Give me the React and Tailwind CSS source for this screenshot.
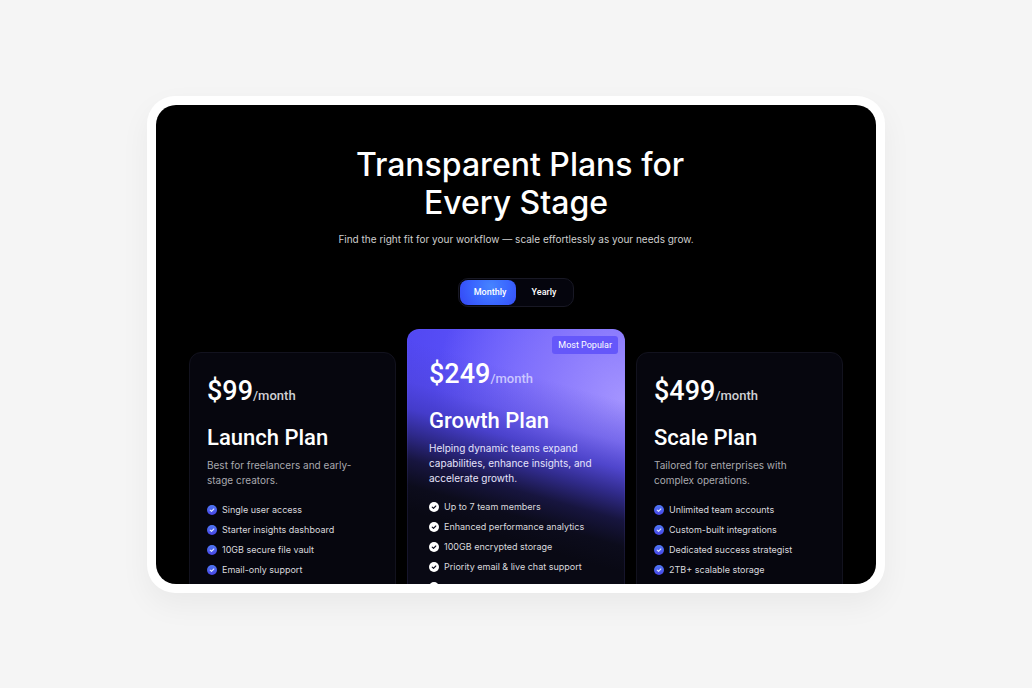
import React, { useState } from 'react'
import clsx from 'clsx'

const plans = [
	{
		id: 'launch',
		name: 'Launch Plan',
		price: '$99',
		description: 'Best for freelancers and early-stage creators.',
		features: [
			'Single user access',
			'Starter insights dashboard',
			'10GB secure file vault',
			'Email-only support',
		],
	},
	{
		id: 'growth',
		name: 'Growth Plan',
		price: '$249',
		description:
			'Helping dynamic teams expand capabilities, enhance insights, and accelerate growth.',
		popular: true,
		features: [
			'Up to 7 team members',
			'Enhanced performance analytics',
			'100GB encrypted storage',
			'Priority email & live chat support',
			'',
		],
	},
	{
		id: 'scale',
		name: 'Scale Plan',
		price: '$499',
		description: 'Tailored for enterprises with complex operations.',
		features: [
			'Unlimited team accounts',
			'Custom-built integrations',
			'Dedicated success strategist',
			'2TB+ scalable storage',
		],
	},
]

function CheckIcon({ popular }) {
	return (
		<svg viewBox="0 0 10 10" className="size-[10px] shrink-0" aria-hidden="true">
			<defs>
				<linearGradient id="check-blue" x1="0" y1="0" x2="0" y2="1">
					<stop offset="0" stopColor="#4f78f6" />
					<stop offset="1" stopColor="#4845e6" />
				</linearGradient>
			</defs>
			<circle cx="5" cy="5" r="5" fill={popular ? '#ffffff' : 'url(#check-blue)'} />
			<path
				d="M3.2 5.1 4.5 6.3 6.8 4"
				fill="none"
				stroke={popular ? '#0b0b1c' : '#dfe6ff'}
				strokeWidth="1.1"
				strokeLinecap="round"
				strokeLinejoin="round"
			/>
		</svg>
	)
}

function BillingToggle({ billing, setBilling }) {
	return (
		<div className="mt-[31px] flex rounded-[10px] border border-[#181824] bg-[#05050d] p-px">
			{['Monthly', 'Yearly'].map(label => (
				<button
					key={label}
					type="button"
					aria-pressed={billing === label}
					onClick={() => setBilling(label)}
					className={clsx(
						"h-[25px] w-14 rounded-lg text-center font-['Roboto',sans-serif] text-[9px] font-medium text-white",
						billing === label &&
							'bg-[radial-gradient(circle_at_55%_25%,#4684ff_0%,#3a66ff_50%,#3547f5_100%)] pl-1'
					)}
				>
					{label}
				</button>
			))}
		</div>
	)
}

function PlanCard({ plan }) {
	return (
		<article
			className={clsx(
				'relative rounded-xl border',
				plan.popular
					? 'border-[#8c80ff]/10 bg-[#090914] bg-[linear-gradient(196deg,#4a40d000_70px,#4a40d066_110px,#4038c0cc_136px,#2c2785f2_160px,#17153f_185px,#0c0c1c_210px,#090914_235px),radial-gradient(circle_190px_at_100%_70px,#a494ff_0%,#8676fc_45%,#6a5fff00_100%),linear-gradient(100deg,#5248f2_0%,#6259ff_55%,#7a6cff_100%)] bg-origin-border px-[21px] pt-[26px]'
					: 'mt-[23px] border-[#12121e] bg-[#06060e] px-[17px] pt-5'
			)}
		>
			{plan.popular && (
				<span className="absolute right-[6px] top-[6px] rounded-[3px] bg-[#6557fa] px-[6px] font-['Roboto',sans-serif] text-[9px] leading-[18px] text-white">
					Most Popular
				</span>
			)}
			<p className="font-['Roboto',sans-serif] text-[27px] font-medium leading-9 text-white">
				{plan.price}
				<span
					className={clsx(
						'text-[13px] leading-none',
						plan.popular ? 'text-[#cbc6ff]' : 'text-[#d0d0d4]'
					)}
				>
					/month
				</span>
			</p>
			<h2 className="mt-[15px] font-['Roboto',sans-serif] text-[22px] font-medium leading-[28px] text-white">
				{plan.name}
			</h2>
			<p
				className={clsx(
					'mt-[6px] text-[10px] leading-[15px]',
					plan.popular ? 'text-[#e6e4fb]' : 'mr-4 text-[#a9a9ae]'
				)}
			>
				{plan.description}
			</p>
			<ul
				className={clsx(
					'flex flex-col gap-[6px] pb-8',
					plan.popular ? 'mt-[14px]' : 'mt-[15px]'
				)}
			>
				{plan.features.map(feature => (
					<li
						key={feature}
						className="flex min-h-[14px] items-center gap-[5px] text-[9px] leading-[14px] text-[#d9d9de]"
					>
						<CheckIcon popular={plan.popular} />
						{feature}
					</li>
				))}
			</ul>
		</article>
	)
}

function App() {
	const [billing, setBilling] = useState('Monthly')
	return (
		<main className="min-h-screen bg-[#f5f5f5] px-[147px] py-24 font-['Inter',sans-serif]">
			<div className="rounded-[28px] bg-white p-[9px] shadow-[0_12px_30px_rgba(0,0,0,0.05)]">
				<section className="aspect-[720/479] overflow-hidden rounded-[20px] bg-black px-[33px]">
					<div className="flex flex-col items-center pt-[41px]">
						<h1 className="indent-2 text-center text-[32px] font-medium leading-[38px] text-white">
							Transparent Plans for
							<br />
							Every Stage
						</h1>
						<p className="mt-[9px] text-[10px] leading-4 text-[#cfcfcf]">
							Find the right fit for your workflow — scale effortlessly as your needs grow.
						</p>
						<BillingToggle billing={billing} setBilling={setBilling} />
					</div>
					<div className="mt-[22px] grid grid-cols-[207fr_218fr_207fr] gap-[11px]">
						{plans.map(plan => (
							<PlanCard key={plan.id} plan={plan} />
						))}
					</div>
				</section>
			</div>
		</main>
	)
}

export default App
